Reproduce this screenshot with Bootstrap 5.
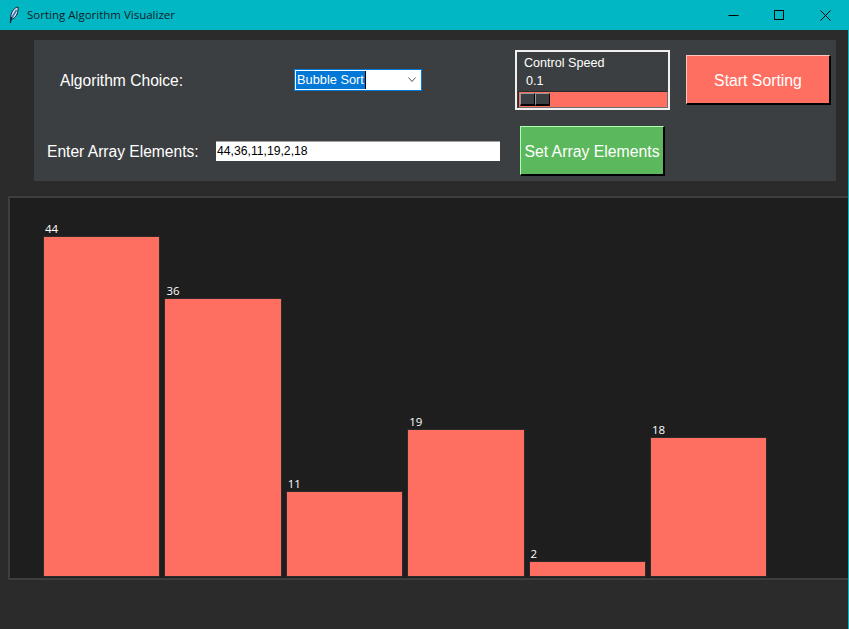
<!DOCTYPE html>
<html lang="en">
<head>
    <meta charset="UTF-8">
    <meta name="viewport" content="width=device-width, initial-scale=1.0">
    <title>Sorting Algorithm Visualizer</title>
    <link href="https://cdn.jsdelivr.net/npm/bootstrap@5.3.0/dist/css/bootstrap.min.css" rel="stylesheet">
    <style>
        html, body {
            height: 100%;
            overflow: hidden;
        }

        body {
            background-color: #2b2b2b;
            border-right: 1px solid #00b7c3;
            font-family: "Liberation Sans", Arial, sans-serif;
            color: #fff;
        }

        .title-bar {
            height: 30px;
            background-color: #00b7c3;
            color: #10202a;
            font-family: "Open Sans", "Noto Sans", sans-serif;
            font-size: 11.5px;
            margin-right: -1px;
        }

        .title-icon {
            margin-left: 7px;
            margin-right: 7px;
        }

        .win-buttons {
            margin-right: 1px;
        }

        .win-btn {
            width: 46px;
            height: 30px;
        }

        .control-panel {
            display: grid;
            grid-template-columns: 182px 299px 171px 1fr;
            grid-template-rows: 80px 61px;
            height: 141px;
            margin: 10px 12px 0 34px;
            background-color: #3c3f41;
            font-size: 15.6px;
        }

        .label-first {
            padding: 2px 0 0 26px;
        }

        .label-second {
            padding: 2px 0 0 13px;
        }

        .algo-select {
            width: 128px;
            height: 22px;
            margin-left: 78px;
            padding: 1px;
            background-color: #fff;
            border: 1px solid #0078d7;
            font-size: 12.8px;
        }

        .algo-selected {
            background-color: #0078d7;
            color: #fff;
            border-right: 1px solid #000;
            padding: 0 1px;
            line-height: 18px;
        }

        .algo-arrow {
            margin-left: auto;
            margin-right: 3px;
        }

        .array-input {
            width: 284px;
            height: 20px;
            padding: 0 1px;
            border: 0;
            border-top: 1px solid #a0a0a0;
            border-radius: 0;
            outline: 0;
            font-family: "Liberation Sans", Arial, sans-serif;
            font-size: 12.2px;
            color: #000;
        }

        .speed-box {
            width: 155px;
            height: 60px;
            margin-top: 10px;
            border: 2px solid #f0f0f0;
            font-size: 12.6px;
            line-height: 14px;
        }

        .speed-title {
            padding: 4px 0 0 7px;
        }

        .speed-value {
            padding: 4px 0 0 9px;
        }

        .speed-trough {
            height: 17px;
            margin: 3px 0 0 1px;
            padding: 1px;
            background-color: #ff6f61;
            border-top: 1px solid #2b2b2b;
            border-left: 1px solid #2b2b2b;
            border-bottom: 1px solid #6e6e6e;
            border-right: 1px solid #6e6e6e;
        }

        .speed-thumb {
            width: 15px;
            height: 100%;
            background-color: #3c3f41;
            border-top: 1px solid #9a9a9a;
            border-left: 1px solid #9a9a9a;
            border-bottom: 2px solid #000;
            border-right: 1px solid #000;
        }

        .raised-btn {
            width: 145px;
            height: 50px;
            padding: 2px 0 0;
            border-radius: 0;
            border-style: solid;
            border-width: 1px 2px 2px 1px;
            color: #fff;
            font-family: "Liberation Sans", Arial, sans-serif;
            font-size: 15.8px;
            white-space: nowrap;
        }

        .btn-start {
            margin-top: 15px;
            background-color: #ff6f61;
            border-color: #ffc5bf #000 #000 #ffc5bf;
        }

        .btn-set {
            margin: 6px 0 0 5px;
            background-color: #5cb85c;
            border-color: #b0ffb0 #000 #000 #b0ffb0;
        }

        .bars-canvas {
            height: 384px;
            margin: 15px 0 0 8px;
            padding: 0 0 1px 33px;
            background-color: #1e1e1e;
            border: 2px solid #3c3f41;
            border-right: 0;
            gap: 4px;
        }

        .bar-col {
            width: 117.400px;
        }

        .bar-value {
            padding-left: 2px;
            font-family: "Open Sans", "Noto Sans", sans-serif;
            font-size: 11.500px;
            line-height: 14px;
        }

        .bar-fill {
            background-color: #ff6f61;
            border: 1px solid #2b2b2b;
        }
    </style>
</head>
<body>
    <div class="title-bar d-flex align-items-center">
        <svg class="title-icon" width="13" height="18" viewBox="0 0 13 18">
            <path d="M11 1C7.500 1.500 4.500 5 3.800 10.500l-.2 3 2.400-.8C9.500 11 11.500 6 11 1z" fill="#d3e2f7" stroke="#10202a" stroke-width="1"/>
            <path d="M9.500 4 4.800 12" stroke="#3a6fb0" stroke-width="1.500" fill="none"/>
            <path d="M4.500 11 3.300 17" stroke="#10202a" stroke-width="1.300" fill="none"/>
        </svg>
        <span>Sorting Algorithm Visualizer</span>
        <div class="win-buttons d-flex ms-auto">
            <div class="win-btn d-flex align-items-center justify-content-center">
                <svg width="11" height="11" viewBox="0 0 11 11"><path d="M0.500 5.500h10" stroke="#000" fill="none"/></svg>
            </div>
            <div class="win-btn d-flex align-items-center justify-content-center">
                <svg width="11" height="11" viewBox="0 0 11 11"><rect x="0.500" y="0.500" width="9" height="9" stroke="#000" fill="none"/></svg>
            </div>
            <div class="win-btn d-flex align-items-center justify-content-center">
                <svg width="11" height="11" viewBox="0 0 11 11"><path d="M0.500 0.500l10 10M10.500 0.500l-10 10" stroke="#000" fill="none"/></svg>
            </div>
        </div>
    </div>

    <div class="control-panel">
        <div class="label-first d-flex align-items-center">Algorithm Choice:</div>
        <div class="d-flex align-items-center">
            <div class="algo-select d-flex align-items-center">
                <span class="algo-selected">Bubble Sort</span>
                <svg class="algo-arrow" width="10" height="6" viewBox="0 0 10 6"><path d="M1.500 0.500 5 4.500l3.500-4" stroke="#555" fill="none"/></svg>
            </div>
        </div>
        <div>
            <div class="speed-box">
                <div class="speed-title">Control Speed</div>
                <div class="speed-value">0.1</div>
                <div class="speed-trough d-flex">
                    <div class="speed-thumb"></div>
                    <div class="speed-thumb"></div>
                </div>
            </div>
        </div>
        <div><button class="btn raised-btn btn-start" type="button">Start Sorting</button></div>

        <div class="label-second d-flex align-items-center">Enter Array Elements:</div>
        <div class="d-flex align-items-center"><input class="array-input" type="text" value="44,36,11,19,2,18"></div>
        <div><button class="btn raised-btn btn-set" type="button">Set Array Elements</button></div>
        <div></div>
    </div>

    <div class="bars-canvas d-flex align-items-end">
        <div class="bar-col"><div class="bar-value">44</div><div class="bar-fill" style="height: 341px"></div></div>
        <div class="bar-col"><div class="bar-value">36</div><div class="bar-fill" style="height: 279px"></div></div>
        <div class="bar-col"><div class="bar-value">11</div><div class="bar-fill" style="height: 86px"></div></div>
        <div class="bar-col"><div class="bar-value">19</div><div class="bar-fill" style="height: 148px"></div></div>
        <div class="bar-col"><div class="bar-value">2</div><div class="bar-fill" style="height: 16px"></div></div>
        <div class="bar-col"><div class="bar-value">18</div><div class="bar-fill" style="height: 140px"></div></div>
    </div>

    <script src="https://cdn.jsdelivr.net/npm/bootstrap@5.3.0/dist/js/bootstrap.bundle.min.js"></script>
</body>
</html>
